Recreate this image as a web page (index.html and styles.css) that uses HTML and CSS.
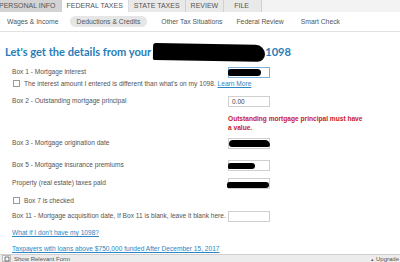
FILE: index.html
```html
<!DOCTYPE html>
<html>
<head>
<meta charset="utf-8">
<link rel="stylesheet" href="styles.css">
</head>
<body>
<div class="page">
  <div class="tabs">
    <div class="tab tab-done">PERSONAL INFO</div>
    <div class="tab tab-active">FEDERAL TAXES</div>
    <div class="tab">STATE TAXES</div>
    <div class="tab">REVIEW</div>
    <div class="tab tab-file">FILE</div>
    <div class="tab-rest"></div>
  </div>
  <div class="subnav">
    <span class="sub sub-first">Wages &amp; Income</span>
    <span class="sub sub-active">Deductions &amp; Credits</span>
    <span class="sub">Other Tax Situations</span>
    <span class="sub">Federal Review</span>
    <span class="sub sub-last">Smart Check</span>
  </div>
  <div class="content">
    <h1 class="title">Let's get the details from your <span class="redact-title"></span>1098</h1>

    <div class="row row1">
      <div class="label">Box 1 - Mortgage interest</div>
      <div class="field field-focus"><span class="redact r1"></span></div>
    </div>
    <div class="check-row">
      <span class="box"></span>
      <span class="label">The interest amount I entered is different than what's on my 1098. <a class="link" href="#">Learn More</a></span>
    </div>

    <div class="row row2">
      <div class="label">Box 2 - Outstanding mortgage principal</div>
      <div class="field-col">
        <div class="field"><span class="val">0.00</span></div>
        <div class="error">Outstanding mortgage principal must have a value.</div>
      </div>
    </div>

    <div class="row row3">
      <div class="label">Box 3 - Mortgage origination date</div>
      <div class="field"><span class="redact r3"></span></div>
    </div>
    <div class="row row4">
      <div class="label">Box 5 - Mortgage insurance premiums</div>
      <div class="field"><span class="redact r4"></span></div>
    </div>
    <div class="row row5">
      <div class="label">Property (real estate) taxes paid</div>
      <div class="field"><span class="redact r5"></span></div>
    </div>
    <div class="check-row check7">
      <span class="box"></span>
      <span class="label">Box 7 is checked</span>
    </div>
    <div class="row row6">
      <div class="label">Box 11 - Mortgage acquisition date, If Box 11 is blank, leave it blank here.</div>
      <div class="field"></div>
    </div>
    <div class="links">
      <a class="link" href="#">What if I don't have my 1098?</a>
      <a class="link" href="#">Taxpayers with loans above $750,000 funded After December 15, 2017</a>
    </div>
  </div>
  <div class="bottom">
    <div class="bleft">
      <span class="bbtn"><svg width="6" height="6" viewBox="0 0 6 6"><path d="M1 1h4v4h-4z" fill="none" stroke="#555" stroke-width="0.8"/></svg></span>
      <span class="btext">Show Relevant Form</span>
    </div>
    <div class="bright"><span class="tri">&#9650;</span> Upgrade</div>
  </div>
</div>
</body>
</html>
```

FILE: styles.css
```css
* { box-sizing: border-box; }
html, body { margin: 0; padding: 0; }
body {
  width: 400px;
  height: 262px;
  overflow: hidden;
  background: #fff;
  font-family: "Liberation Sans", Arial, sans-serif;
  color: #444;
}
.page {
  width: 400px;
  height: 262px;
  display: flex;
  flex-direction: column;
  overflow: hidden;
}
.tabs {
  display: flex;
  height: 12px;
  background: #e6e6e6;
  flex-shrink: 0;
}
.tab {
  font-size: 7px;
  line-height: 12px;
  color: #555;
  padding: 0 5px;
  border-right: 1px solid #d0d0d0;
  background: #e9e9e9;
  white-space: nowrap;
}
.tab-done {
  background: #d3d3d3;
  padding-left: 0;
  margin-left: -1px;
  padding-right: 5px;
}
.tab-active {
  background: #fff;
  color: #555;
  border-right: 1px solid #ddd;
}
.tab-file { padding: 0 12px 0 10px; }
.tab-rest {
  flex: 1;
  background: #f3f3f3;
}
.subnav {
  display: flex;
  align-items: center;
  height: 20px;
  padding-left: 7px;
  border-bottom: 1px solid #e2e2e2;
  flex-shrink: 0;
}
.sub {
  font-size: 6.8px;
  color: #555;
  margin-right: 14px;
  padding: 2px 0;
  white-space: nowrap;
}
.sub-first { margin-right: 11px; }
.sub-active {
  background: #e6e6e6;
  border-radius: 7px;
  padding: 2px 7px;
}
.sub-last { margin-left: 3px; }
.content {
  flex: 1;
  padding: 0 0 0 12px;
  position: relative;
}
.title {
  font-family: Lato, "Open Sans", sans-serif;
  font-weight: 700;
  font-size: 11.1px;
  color: #2a7db8;
  margin: 12px 0 0 -7px;
  height: 16px;
  line-height: 16px;
  white-space: nowrap;
  display: flex;
  align-items: center;
}
.redact-title {
  display: inline-block;
  width: 112px;
  height: 17px;
  background: #000;
  border-radius: 3px 10px 8px 2px;
  margin: 0 0 0 2px;
  transform: rotate(1deg);
}
.label {
  font-size: 6.6px;
  color: #555;
  white-space: nowrap;
}
.row {
  display: flex;
  align-items: flex-start;
}
.row .label {
  width: 216px;
  line-height: 10px;
  padding-top: 0;
}
.field {
  width: 42px;
  height: 11px;
  border: 1px solid #cfcfcf;
  background: #fff;
  position: relative;
  display: flex;
  align-items: center;
}
.field-focus { border-color: #7fb0d8; }
.val {
  font-size: 6.5px;
  color: #444;
  padding-left: 3px;
}
.redact {
  position: absolute;
  background: #000;
  border-radius: 3px 4px 4px 2px;
}
.r1 { left: -1px; top: 1px; width: 33px; height: 7px; }
.r3 { left: 0; top: 1px; width: 41px; height: 7px; border-radius: 4px 5px 2px 3px; }
.r4 { left: -1px; top: 2px; width: 27px; height: 6px; }
.r5 { left: -2px; top: 3px; width: 42px; height: 6px; }
.row1 { margin-top: 7px; }
.check-row {
  display: flex;
  align-items: center;
  margin-top: 2px;
  margin-left: 1px;
}
.box {
  width: 7px;
  height: 7px;
  border: 1px solid #999;
  background: #fff;
  margin-right: 4px;
  flex-shrink: 0;
}
.link {
  color: #2b86c2;
  text-decoration: underline;
}
.row2 { margin-top: 9px; }
.field-col { display: flex; flex-direction: column; }
.error {
  margin-top: 7px;
  width: 138px;
  font-size: 6.6px;
  font-weight: 700;
  color: #c8202b;
  line-height: 9px;
}
.row3 { margin-top: 6px; }
.row4 { margin-top: 11px; }
.row5 { margin-top: 7px; }
.check7 { margin-top: 8px; }
.row6 { margin-top: 7px; }
.links {
  display: flex;
  flex-direction: column;
  gap: 9px;
  margin-top: 7px;
  font-size: 6.6px;
}
.bottom {
  height: 8px;
  background: #ececec;
  border-top: 1px solid #cfcfcf;
  display: flex;
  justify-content: space-between;
  align-items: flex-start;
  flex-shrink: 0;
}
.bleft { display: flex; align-items: flex-start; }
.bbtn {
  width: 9px;
  height: 7px;
  border: 1px solid #bbb;
  background: #f8f8f8;
  margin-left: 2px;
  display: flex;
  align-items: center;
  justify-content: center;
}
.btext {
  font-size: 6px;
  color: #555;
  margin-left: 3px;
  line-height: 8px;
}
.bright {
  font-size: 6px;
  color: #555;
  line-height: 8px;
  padding-right: 1px;
  white-space: nowrap;
}
.tri { font-size: 4px; }
```
